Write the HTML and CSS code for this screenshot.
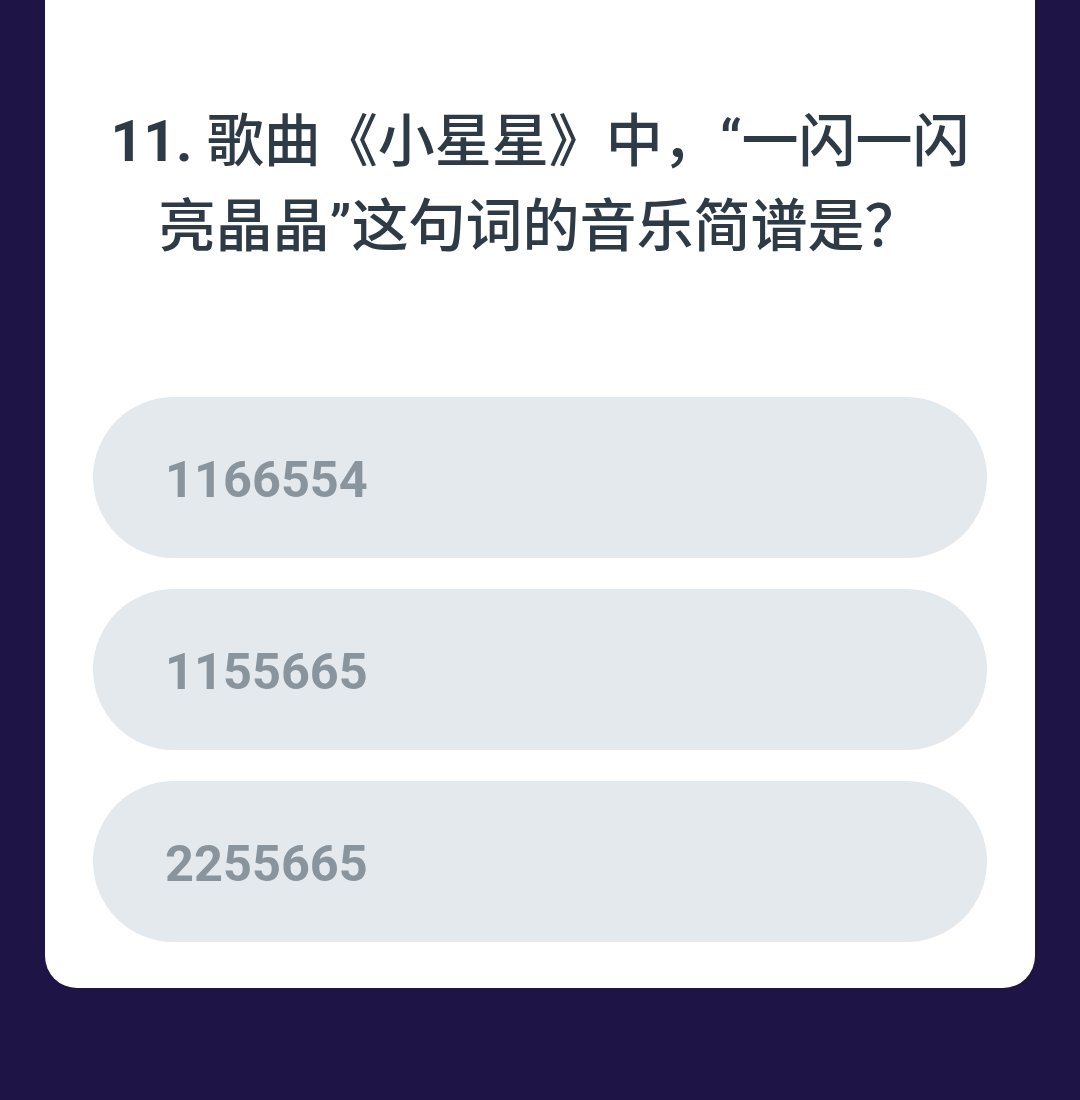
FILE: index.html
```html
<!DOCTYPE html>
<html lang="zh-CN">
<head>
<meta charset="utf-8">
<link rel="stylesheet" href="styles.css">
</head>
<body>
<main class="card">
  <h1 class="question"><span class="num">11.</span> 歌曲《小星星》中，“一闪一闪<br>亮晶晶”这句词的音乐简谱是？</h1>
  <div class="options">
    <div class="option">1166554</div>
    <div class="option">1155665</div>
    <div class="option">2255665</div>
  </div>
</main>
</body>
</html>
```
FILE: styles.css
```css
html, body {
  margin: 0;
  padding: 0;
}
body {
  background: #1e1445;
  width: 1080px;
  height: 1100px;
  overflow: hidden;
  font-family: Roboto, "Noto Sans CJK SC", sans-serif;
}
.card {
  margin: 0 45px;
  background: #ffffff;
  border-radius: 0 0 32px 32px;
  padding: 99px 48px 46px;
}
.question {
  margin: 0;
  text-align: center;
  font-size: 57px;
  line-height: 85px;
  font-weight: 500;
  color: #2e3b47;
}
.num {
  font-weight: 700;
}
.options {
  margin-top: 128px;
  display: flex;
  flex-direction: column;
  gap: 31px;
}
.option {
  height: 161px;
  border-radius: 81px;
  background: #e4e9ee;
  display: flex;
  align-items: center;
  padding-left: 72px;
  padding-top: 4px;
  box-sizing: border-box;
  font-size: 50.5px;
  font-weight: 700;
  color: #8a949d;
}
```
